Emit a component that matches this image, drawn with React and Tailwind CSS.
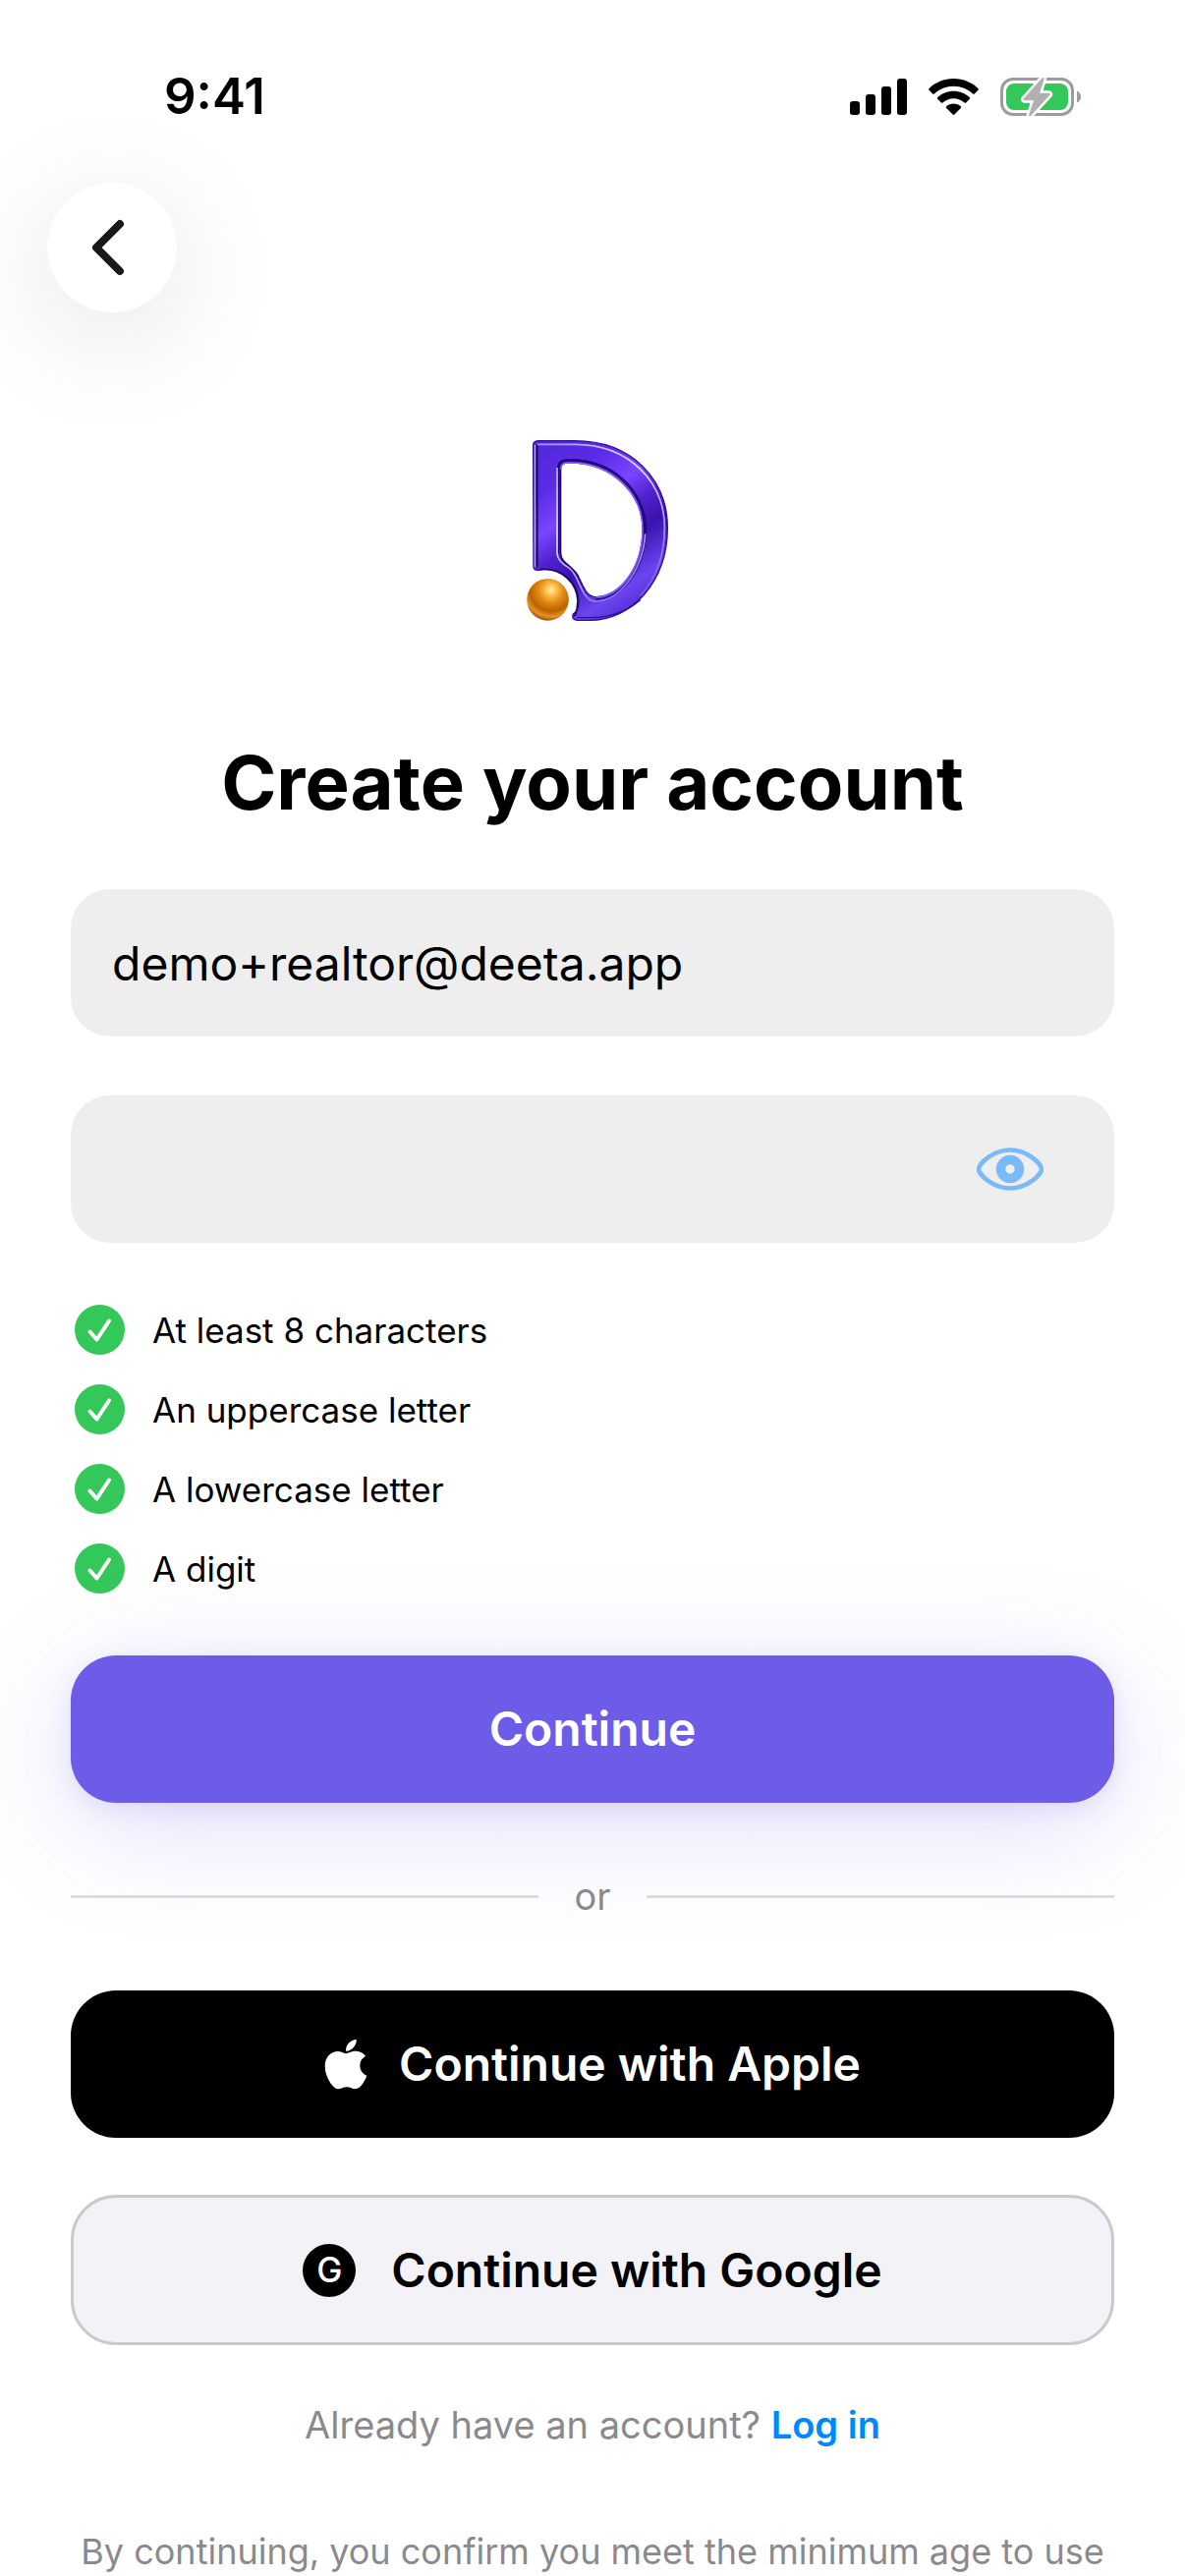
import { useState } from 'react';
import { FaApple } from 'react-icons/fa';

const rules = ['At least 8 characters', 'An uppercase letter', 'A lowercase letter', 'A digit'];

function StatusBar() {
  return (
    <div className="flex items-center justify-between pt-[66px] pl-[167px] pr-[106px]">
      <span className="text-[51px] leading-[64px] font-semibold">9:41</span>
      <div className="flex items-center gap-[22px]">
        <svg className="w-[58px] h-[37px]" viewBox="0 0 58 37" aria-hidden="true">
          <rect x="0" y="23" width="10" height="14" rx="3" />
          <rect x="16" y="16" width="10" height="21" rx="3" />
          <rect x="32" y="8" width="10" height="29" rx="3" />
          <rect x="48" y="0" width="10" height="37" rx="3" />
        </svg>
        <svg className="w-[51px] h-[37px]" viewBox="0 0 51 37" aria-hidden="true">
          <path d="M25.5 0C35.3 0 44.2 3.8 50.4 10.1a1.2 1.2 0 0 1 0 1.7l-3.6 3.6a1.2 1.2 0 0 1-1.7 0C40 10.6 33.1 7.7 25.5 7.7S11 10.6 5.9 15.4a1.2 1.2 0 0 1-1.7 0L.6 11.8a1.2 1.2 0 0 1 0-1.7C6.8 3.8 15.7 0 25.5 0Z" />
          <path d="M25.5 12.7c6.3 0 12 2.4 16.3 6.4a1.2 1.2 0 0 1 0 1.7l-3.7 3.7a1.2 1.2 0 0 1-1.6 0c-2.9-2.6-6.7-4.2-11-4.2s-8.1 1.6-11 4.2a1.2 1.2 0 0 1-1.6 0l-3.7-3.7a1.2 1.2 0 0 1 0-1.7c4.3-4 10-6.4 16.3-6.4Z" />
          <path d="M25.5 25.5c2.8 0 5.3 1 7.3 2.7.5.5.5 1.2.1 1.7l-6.5 6.6a1.3 1.3 0 0 1-1.8 0l-6.5-6.6c-.4-.5-.4-1.2.1-1.7 2-1.7 4.5-2.7 7.3-2.7Z" />
        </svg>
        <svg className="w-[82px] h-[41px]" viewBox="0 0 82 41" aria-hidden="true">
          <rect x="1.5" y="2.5" width="72" height="36" rx="11.5" fill="#fff" stroke="#9c9c9c" strokeWidth="3" />
          <rect x="6" y="7" width="63" height="27" rx="8" fill="#34c759" />
          <path d="M78 14.5c2.6 1.2 4 3.3 4 6s-1.4 4.8-4 6Z" fill="#9c9c9c" />
          <path
            d="M42.5 1.500 23.800 22.300c-.8.9-.3 2 .9 2H34l-4.800 14.400c-.5 1.500 1 2.200 2 1l19.200-20.900c.8-.9.3-2-.9-2h-9.300l4.400-14.300c.4-1.400-1.200-2.100-2.100-1Z"
            fill="#b0b0b0"
            stroke="#fff"
            strokeWidth="5"
            paintOrder="stroke"
            strokeLinejoin="round"
          />
        </svg>
      </div>
    </div>
  );
}

function Logo() {
  return (
    <svg className="mx-auto h-[184px] w-[154px]" viewBox="78 84 462 552" role="img" aria-label="Deeta">
      <defs>
        <linearGradient id="body" x1="128" y1="85" x2="500" y2="635" gradientUnits="userSpaceOnUse">
          <stop offset="0" stopColor="#5527d8" />
          <stop offset="0.22" stopColor="#5a2be6" />
          <stop offset="0.38" stopColor="#7a45ff" />
          <stop offset="0.5" stopColor="#4f22cf" />
          <stop offset="0.62" stopColor="#3a12ae" />
          <stop offset="0.8" stopColor="#6d45f0" />
          <stop offset="1" stopColor="#3c18bc" />
        </linearGradient>
        <linearGradient id="edge" x1="140" y1="95" x2="530" y2="600" gradientUnits="userSpaceOnUse">
          <stop offset="0" stopColor="#a88bff" />
          <stop offset="0.4" stopColor="#e6dcff" />
          <stop offset="0.65" stopColor="#b49aff" />
          <stop offset="1" stopColor="#5a34de" />
        </linearGradient>
        <radialGradient id="ball" cx="0.58" cy="0.27" r="0.75">
          <stop offset="0" stopColor="#fff3b0" />
          <stop offset="0.14" stopColor="#ffc85a" />
          <stop offset="0.4" stopColor="#e38a14" />
          <stop offset="0.68" stopColor="#b96200" />
          <stop offset="0.85" stopColor="#e8922a" />
          <stop offset="1" stopColor="#8a4a04" />
        </radialGradient>
      </defs>
      <path
        fillRule="evenodd"
        fill="url(#body)"
        stroke="#2a0b98"
        strokeWidth="4"
        d="M128 97Q130 87 142 86H255C430 86 538 205 538 352C538 515 430 634 300 634H262Q244 632 250 615C262 608 268 592 267 570C262 515 212 472 150 480Q129 484 129 472ZM212 172Q212 153 234 153C370 150 462 250 462 355C462 480 390 560 320 563C288 562 282 530 264 497C242 465 212 458 212 430Z"
      />
      <path fill="none" stroke="#170463" strokeWidth="5" d="M140 96V470M152 478C215 474 262 520 264 575Q264 600 254 622" />
      <path fill="none" stroke="#b59cff" strokeWidth="4" d="M133 98V472" />
      <path fill="none" stroke="url(#edge)" strokeWidth="5" d="M140 97H255C420 97 529 210 529 352C529 440 500 510 455 560" />
      <path fill="none" stroke="#2c0f9f" strokeWidth="4" d="M455 572C410 610 360 626 300 626H262" />
      <path
        fill="none"
        stroke="#20077c"
        strokeWidth="8"
        d="M205 430V172Q205 145 234 145C375 142 470 245 470 355C470 485 392 570 320 572"
      />
      <path
        fill="none"
        stroke="url(#edge)"
        strokeWidth="5"
        d="M201 168V430Q202 455 236 473C268 495 272 560 306 574C380 590 462 490 470 370"
      />
      <path fill="none" stroke="#8a68ff" strokeWidth="4" d="M212 172Q212 153 234 153C370 150 462 250 462 355C462 480 390 560 320 563" />
      <path fill="none" stroke="#20077c" strokeWidth="4" d="M211 190V430C214 460 245 464 266 500" />
      <circle cx="172.5" cy="571" r="64" fill="url(#ball)" />
    </svg>
  );
}

function EyeIcon() {
  return (
    <svg className="w-[68px] h-[44px]" viewBox="0 0 68 44" fill="none" aria-hidden="true">
      <path
        d="M34 2.500C52 2.500 66 17 66 22S52 41.500 34 41.500 2 27 2 22 16 2.500 34 2.500Z"
        stroke="#7abaf8"
        strokeWidth="4.500"
      />
      <circle cx="34" cy="22" r="9.500" stroke="#7abaf8" strokeWidth="9.500" />
    </svg>
  );
}

function Rule({ children }) {
  return (
    <li className="flex items-center gap-7">
      <svg className="size-[51px] shrink-0" viewBox="0 0 51 51" aria-hidden="true">
        <circle cx="25.5" cy="25.5" r="25.5" fill="#34c759" />
        <path d="M15.500 27.500 22.500 35.500 35 16.500" fill="none" stroke="#fff" strokeWidth="4" strokeLinecap="round" strokeLinejoin="round" />
      </svg>
      <span className="text-[35px] leading-[48px]">{children}</span>
    </li>
  );
}

export default function App() {
  const [email, setEmail] = useState('demo+realtor@deeta.app');
  const [password, setPassword] = useState('');
  const [visible, setVisible] = useState(false);

  return (
    <main className="min-h-screen overflow-hidden bg-white font-['Inter','Liberation_Sans',sans-serif] text-black">
      <StatusBar />
      <button
        type="button"
        aria-label="Back"
        className="mt-14 ml-12 flex size-[132px] items-center justify-center rounded-full bg-white shadow-[0_24px_120px_rgba(0,0,0,0.12)]"
      >
        <svg className="mr-[9px] h-[58px] w-[34px]" viewBox="0 0 34 58" fill="none" aria-hidden="true">
          <path d="M29 5 5 29l24 24" stroke="#1a1a1a" strokeWidth="8" strokeLinecap="round" strokeLinejoin="round" />
        </svg>
      </button>

      <div className="mt-[130px] px-[72px]">
        <Logo />
        <h1 className="mt-[116px] text-center text-[76px] leading-[96px] font-bold whitespace-nowrap">
          Create your account
        </h1>

        <form onSubmit={(e) => e.preventDefault()} className="mt-[61px]">
          <input
            type="email"
            aria-label="Email"
            value={email}
            onChange={(e) => setEmail(e.target.value)}
            className="block h-[150px] w-full rounded-[40px] bg-[#eeeeee] px-[42px] text-[48px] outline-none"
          />
          <div className="mt-[60px] flex h-[150px] items-center rounded-[40px] bg-[#eeeeee] pr-[72px] pl-[42px]">
            <input
              type={visible ? 'text' : 'password'}
              aria-label="Password"
              value={password}
              onChange={(e) => setPassword(e.target.value)}
              className="h-full min-w-0 flex-1 bg-transparent text-[48px] outline-none"
            />
            <button type="button" aria-label="Show password" onClick={() => setVisible(!visible)}>
              <EyeIcon />
            </button>
          </div>

          <ul className="mt-[63px] flex flex-col gap-[30px] pl-1">
            {rules.map((rule) => (
              <Rule key={rule}>{rule}</Rule>
            ))}
          </ul>

          <button
            type="submit"
            className="mt-[63px] h-[150px] w-full rounded-[46px] bg-[#6c5ce7] text-[48px] font-semibold text-white shadow-[0_24px_120px_rgba(108,92,231,0.2),0_6px_24px_rgba(108,92,231,0.14)]"
          >
            Continue
          </button>
        </form>

        <div className="mt-[71px] flex items-center gap-9 text-[38px] leading-[48px] text-[#8a8a8e]">
          <span className="h-[3px] flex-1 bg-[#dcdcdc]" />
          or
          <span className="h-[3px] flex-1 bg-[#dcdcdc]" />
        </div>

        <button
          type="button"
          className="mt-[72px] flex h-[150px] w-full items-center justify-center gap-8 rounded-[46px] bg-black text-[48px] font-semibold text-white"
        >
          <FaApple className="size-[58px] -mx-[7px]" />
          Continue with Apple
        </button>
        <button
          type="button"
          className="mt-[58px] flex h-[153px] w-full items-center justify-center gap-9 rounded-[46px] border-[3px] border-[#c9c9ce] bg-[#f2f2f7] text-[48px] font-semibold"
        >
          <span aria-hidden="true" className="flex size-[54px] items-center justify-center rounded-full bg-black text-[35px] leading-none font-medium text-white">
            G
          </span>
          Continue with Google
        </button>

        <p className="mt-[57px] text-center text-[38px] leading-[48px] text-[#8a8a8e]">
          Already have an account?{' '}
          <a href="#login" className="font-semibold text-[#0088ff]">
            Log in
          </a>
        </p>
      </div>
      <p className="mt-[81px] text-center text-[36px] leading-[48px] whitespace-nowrap text-[#8a8a8e]">
        By continuing, you confirm you meet the minimum age to use
      </p>
    </main>
  );
}
